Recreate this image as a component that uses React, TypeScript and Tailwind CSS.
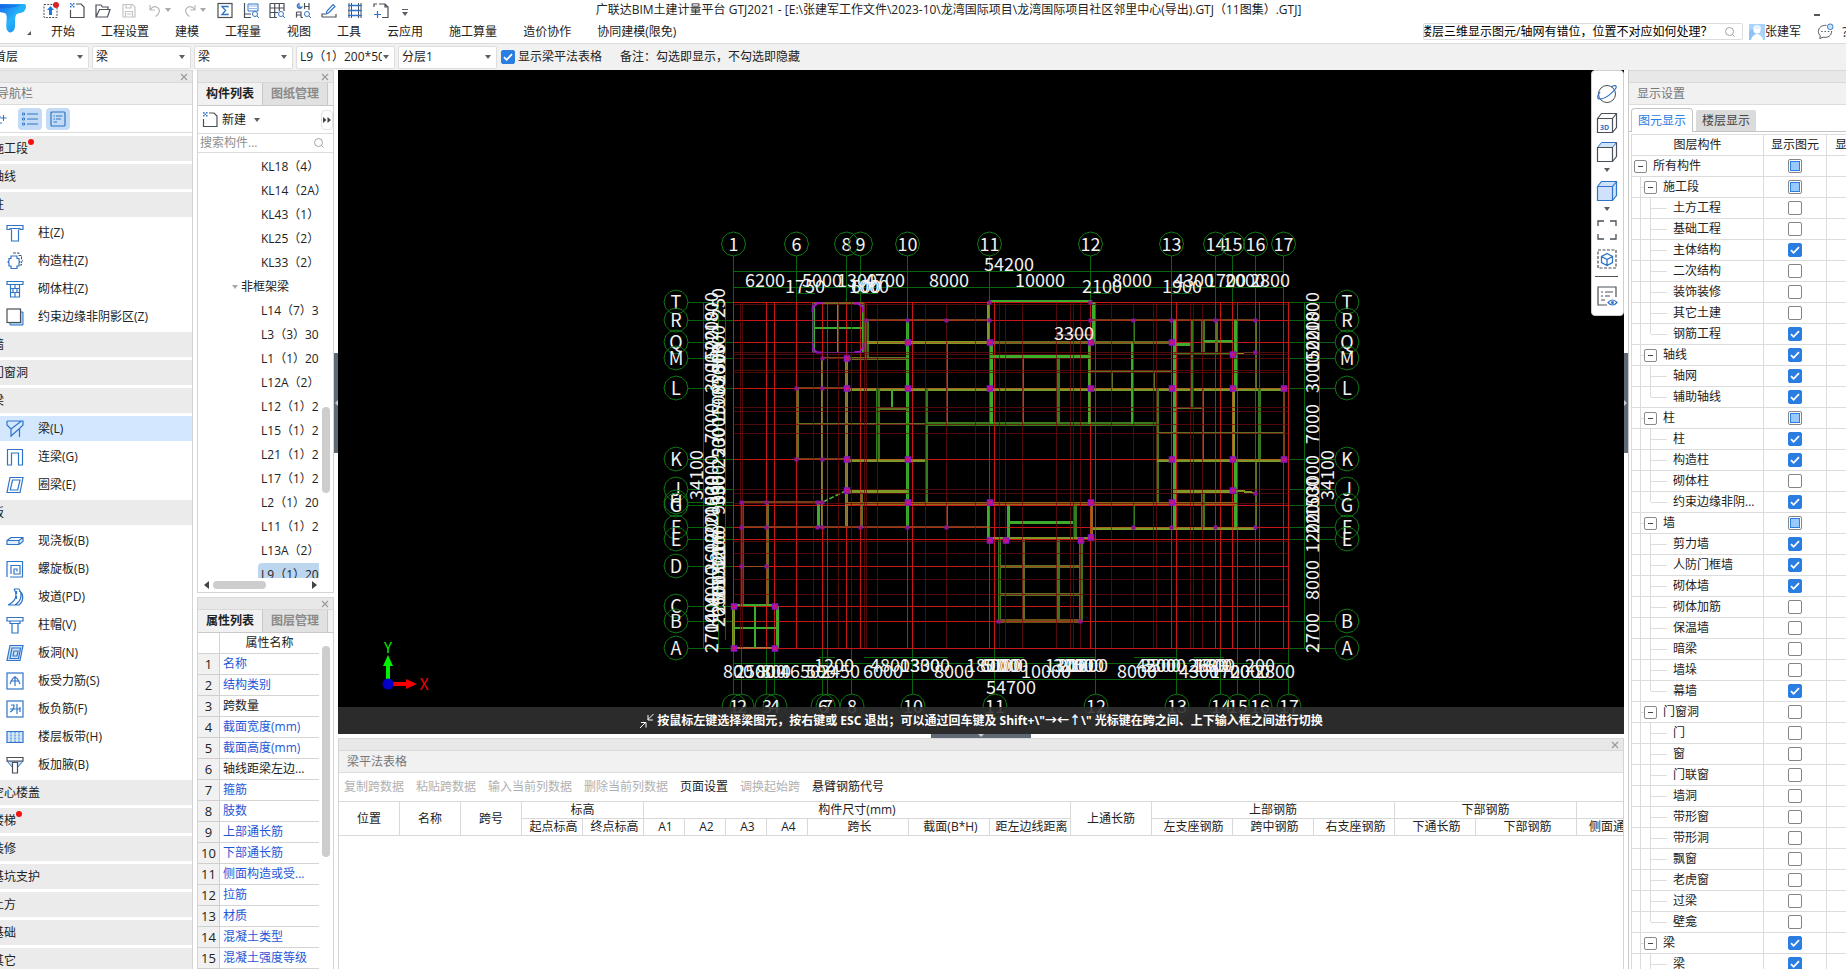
import { useEffect, useRef, type ReactNode } from "react";

const FONT = "font-['Open_Sans','Noto_Sans_CJK_SC',sans-serif]";

/* ---------- shared controls ---------- */

type CheckState = "on" | "off" | "mixed";

function Check({ id, label, state }: { id: string; label?: string; state: CheckState }) {
  const ref = useRef<HTMLInputElement>(null);
  useEffect(() => {
    if (ref.current) ref.current.indeterminate = state === "mixed";
  }, [state]);
  return (
    <span className="relative flex h-3.5 w-3.5 shrink-0">
      <input
        ref={ref}
        id={id}
        type="checkbox"
        aria-label={label}
        defaultChecked={state === "on"}
        className="peer h-3.5 w-3.5 appearance-none rounded-xs border border-[#858585] bg-white checked:border-[#2a7de1] checked:bg-[#2a7de1]"
      />
      <svg viewBox="0 0 14 14" className="pointer-events-none absolute inset-0 hidden h-3.5 w-3.5 peer-checked:block">
        <path d="M3 7.2 5.6 9.8 11 4.2" fill="none" stroke="#fff" strokeWidth="1.8" />
      </svg>
      <span className="pointer-events-none absolute inset-0.5 hidden border border-[#2a7de1] bg-[#99caff] peer-indeterminate:block" />
    </span>
  );
}

function CloseStrip({ name, closable = true }: { name: string; closable?: boolean }) {
  return (
    <div className="flex h-[13px] shrink-0 items-center justify-end border-t border-b border-[#d9d9d9] bg-[#e8e8e8] pr-1">
      {closable && (
        <button aria-label={"关闭" + name} className="flex">
          <svg viewBox="0 0 8 8" className="h-2 w-2">
            <path d="M1 1 7 7M7 1 1 7" stroke="#9a9a9a" strokeWidth="1.2" />
          </svg>
        </button>
      )}
    </div>
  );
}

function Caret({ light = false }: { light?: boolean }) {
  return (
    <svg viewBox="0 0 6 4" className="h-1 w-1.5">
      <path d="M0 0h6L3 4z" fill={light ? "#a8a8a8" : "#5a5f66"} />
    </svg>
  );
}

/* ---------- top bar icons ---------- */

const K = "#4a5058";
const B = "#2f74c8";

const topIcons: { name: string; art: ReactNode; menu?: boolean }[] = [
  {
    name: "更新",
    art: (
      <>
        <rect x="1" y="2.5" width="13" height="13" fill="none" stroke={K} strokeDasharray="2 1.2" />
        <path d="M7.5 4 11 8H9v5H6V8H4z" fill="#1e78e0" />
        <circle cx="13" cy="3" r="3" fill="#d8232a" />
      </>
    ),
  },
  {
    name: "新建",
    art: (
      <>
        <path d="M7 2h5l3 3v10.5H1.500V8" fill="none" stroke={K} strokeWidth="1.2" />
        <path d="M1 1h1.500v1.500H1zM4 1h1.500v1.500H4zM2.500 2.500H4V4H2.500zM1 4h1.500v1.500H1zM4 4h1.500v1.500H4z" fill={B} />
      </>
    ),
  },
  { name: "打开", art: <path d="M1 15V3h5l1.500 2H13v2.500M1 15h11.500l2.500-7.500H4.500z" fill="none" stroke={K} strokeWidth="1.200" /> },
  { name: "保存", art: <path d="M2 2.500h9.500L14 5v10H2zM5 2.500V6h5V2.500M4.500 15V9.500h7V15M6 12h4" fill="none" stroke="#c4c4c4" strokeWidth="1.200" /> },
  { name: "撤销", menu: true, art: <path d="M3 3v5h5M3 8c2-3 5-4 7.500-2.500 3 2 2.500 6-2 9" fill="none" stroke="#b9b9b9" strokeWidth="1.200" /> },
  { name: "重做", menu: true, art: <path d="M13 3v5H8M13 8c-2-3-5-4-7.500-2.500-3 2-2.500 6 2 9" fill="none" stroke="#b9b9b9" strokeWidth="1.200" /> },
  {
    name: "汇总",
    art: (
      <>
        <rect x="1" y="1.500" width="14" height="14" fill="none" stroke={K} strokeWidth="1.200" />
        <path d="M11 5.500V4.500H5l3.500 4L5 12.500h6v-1" fill="none" stroke={B} strokeWidth="1.300" />
      </>
    ),
  },
  {
    name: "查看计算式",
    art: (
      <>
        <path d="M1.500 1v14.500H8M1.500 12H8" fill="none" stroke={K} strokeWidth="1.200" />
        <path d="M5 2h10v7H5z" fill="none" stroke={B} />
        <path d="M6.500 4h7M6.500 6.500h7" stroke={B} strokeDasharray="1 1" />
        <circle cx="12" cy="12" r="2.500" fill="#fff" stroke={B} />
        <path d="m14 14 2 2" stroke={B} />
      </>
    ),
  },
  {
    name: "查看工程量",
    art: (
      <>
        <path d="M1 1.500h14V9M1 1.500v14h7M1 6h14M1 10.500h8M5.700 1.500v14M10.300 1.500V9" fill="none" stroke={K} strokeWidth="1.200" />
        <circle cx="12" cy="12" r="2.500" fill="#fff" stroke={B} />
        <path d="m14 14 2 2" stroke={B} />
      </>
    ),
  },
  {
    name: "查看钢筋量",
    art: (
      <>
        <path d="M9.500 1v6M14 1v7M9.500 4.500H14M1.500 10v5.500M1.500 10H6v5.500M1.500 13H6M6 15.500h2" fill="none" stroke={K} strokeWidth="1.200" />
        <path d="M4 1.500A2.500 2.500 0 1 0 7 5H4z" fill="none" stroke={B} strokeWidth="1.200" />
        <circle cx="12" cy="12" r="2.500" fill="#fff" stroke={B} />
        <path d="m14 14 2 2" stroke={B} />
      </>
    ),
  },
  {
    name: "编辑",
    art: (
      <>
        <path d="M1 15h14v-3M1 15v-3h3" fill="none" stroke={K} strokeWidth="1.200" />
        <path d="m5 12 1-3 6-6.500 2 2-6.500 6.500z" fill="none" stroke={B} strokeWidth="1.200" />
      </>
    ),
  },
  {
    name: "钢筋三维",
    art: (
      <>
        <path d="M2 1v15M4.500 1v15M11.500 1v15M14 1v15" stroke={K} />
        <path d="M1 3.500h14M1 8.500h14M1 13.500h14" stroke={B} strokeWidth="1.600" />
      </>
    ),
  },
  {
    name: "局部三维",
    art: (
      <>
        <path d="M1 5V2h3M6 2h6l3 3v10.500H9M12 2v3h3" fill="none" stroke={K} strokeWidth="1.200" />
        <path d="M4.500 9v7M1 12.500h7" stroke={B} strokeWidth="1.200" />
      </>
    ),
  },
];

const menus = ["开始", "工程设置", "建模", "工程量", "视图", "工具", "云应用", "施工算量", "造价协作", "协同建模(限免)"];

function Header() {
  return (
    <header className="flex h-11 shrink-0 border-b border-[#dcdcdc] bg-white">
      <div className="relative w-[43px] shrink-0">
        <svg viewBox="0 0 32 40" className="h-10 w-8">
          <defs>
            <linearGradient id="logo" x1="0" y1="0" x2="1" y2="1">
              <stop offset="0" stopColor="#1b6fe8" />
              <stop offset=".5" stopColor="#25b4fb" />
              <stop offset="1" stopColor="#1677ea" />
            </linearGradient>
          </defs>
          <path d="M0 4h25q2 2 0 6c-2 4-7 2-9 5-2 4 0 12-2 15q-4 5-7 0c-2-4 1-12-1-16-2-2-4-1-6-2z" fill="url(#logo)" />
          <path d="M0 5h20q-9 4-20 3z" fill="#0f5fd8" opacity=".5" />
          <path d="M31 31v4h-4z" fill="#555" />
        </svg>
      </div>
      <div className="flex min-w-0 flex-1 flex-col">
        <div className="flex h-5 items-center">
          <div className="flex shrink-0 items-center gap-2.5">
            {topIcons.map((i) => (
              <button key={i.name} aria-label={i.name} className={i.menu ? "flex w-[25px] items-center gap-0.5" : "flex w-4"}>
                <svg viewBox="0 0 16 17" className="h-[17px] w-4 shrink-0">
                  {i.art}
                </svg>
                {i.menu && <Caret light />}
              </button>
            ))}
            <button aria-label="自定义工具栏" className="flex w-3 flex-col items-center gap-0.5 pt-1">
              <span className="h-px w-1.5 bg-[#5a5f66]" />
              <Caret />
            </button>
          </div>
          <h1 className="min-w-0 flex-1 text-center text-xs leading-5 whitespace-pre text-[#222]">
            广联达BIM土建计量平台 GTJ2021 - [E:\张建军工作文件\2023-10\龙湾国际项目\龙湾国际项目社区邻里中心(导出).GTJ（11图集）.GTJ]
          </h1>
          <div className="flex w-[360px] shrink-0 justify-end pr-[26px]">
            <button aria-label="最小化" className="flex h-3 w-1.5 items-end">
              <span className="h-0.5 w-full bg-[#555]" />
            </button>
          </div>
        </div>
        <div className="flex h-[23px] items-center">
          <nav className="flex gap-[26px] pl-2 text-xs text-[#222]">
            {menus.map((m) => (
              <a key={m} href="#" className="whitespace-nowrap">
                {m}
              </a>
            ))}
          </nav>
          <div className="ml-auto flex shrink-0 items-center">
            <div className="flex h-[17px] w-80 items-center overflow-hidden rounded-xs border border-[#dcdcdc] pr-1.5">
              <input
                aria-label="搜索问题"
                defaultValue="楼层三维显示图元/轴网有错位，位置不对应如何处理？"
                className="-ml-1 min-w-0 flex-1 text-xs text-black outline-none"
              />
              <SearchIcon />
            </div>
            <svg viewBox="0 0 16 16" className="ml-1.5 h-4 w-4">
              <rect width="16" height="16" fill="#a9d3fb" />
              <path d="M0 8q3-6 6 0v8H0z" fill="#8fc2f5" />
              <circle cx="8" cy="6" r="3.500" fill="#fff" />
              <path d="M4 5q0-4 4-4t4 4z" fill="#e8f3fe" />
              <path d="M2 16q1-5 6-6 5 1 6 6z" fill="#fff" />
            </svg>
            <span className="text-xs text-[#222]">张建军</span>
            <button aria-label="消息" className="ml-4 flex">
              <svg viewBox="0 0 18 18" className="h-[17px] w-[17px]">
                <path d="M10 2.500C5 2 1.500 5 1.500 9c0 2 1 3.500 2 4.500L3 16.500l3.500-1.500c5 1 9-1.500 9-6.500" fill="none" stroke={K} />
                <circle cx="14" cy="4" r="3" fill="#cfe4fb" stroke={B} />
                <path d="M4.500 9h1.500M8 9h1.500M11.500 9H13" stroke={K} strokeWidth="1.300" />
              </svg>
            </button>
            <button aria-label="帮助" className="ml-2 w-1 overflow-hidden text-sm text-[#333]">
              ?
            </button>
          </div>
        </div>
      </div>
    </header>
  );
}

function SearchIcon() {
  return (
    <svg viewBox="0 0 12 12" className="h-3 w-3 shrink-0">
      <circle cx="5.500" cy="5.500" r="4" fill="none" stroke="#a5a5a5" />
      <path d="m8.500 8.500 2 2" stroke="#a5a5a5" />
    </svg>
  );
}

const combos = [
  ["楼层", "首层"],
  ["构件大类", "梁"],
  ["构件类型", "梁"],
  ["构件", "L9（1）200*500"],
  ["分层", "分层1"],
];

function ComboBar() {
  return (
    <div className="flex h-[26px] shrink-0 items-center bg-[#f1f1f1] text-xs text-[#222]">
      <div className="-ml-2.5 flex gap-[3px]">
        {combos.map(([label, value]) => (
          <div key={label} className="relative flex h-[23px] w-[99px] items-center">
            <select
              aria-label={label}
              className="h-full w-full appearance-none rounded-xs border border-[#dedede] bg-white pr-3 pl-[3px] outline-none"
            >
              <option>{value}</option>
            </select>
            <span className="pointer-events-none absolute right-1.5">
              <Caret />
            </span>
          </div>
        ))}
      </div>
      <div className="ml-1 flex items-center gap-[3px]">
        <Check id="show-beam-table" state="on" />
        <label htmlFor="show-beam-table">显示梁平法表格</label>
      </div>
      <span className="ml-[18px]">备注：勾选即显示，不勾选即隐藏</span>
    </div>
  );
}

/* ---------- navigation ---------- */

const S = { fill: "none", stroke: B, strokeWidth: 1.2 };

const navArt: Record<string, ReactNode> = {
  column: <path d="M1 1.500h16v4H14v-1H4v1H1zM5.500 5.500V17h7V5.500" {...S} />,
  structural: (
    <>
      <path d="M7 1h6v2.500h2.500V7l1 1.500-1 1.500v3H13" fill="none" stroke={K} strokeDasharray="3 1" />
      <path d="M5 4h6v2.500h2V9l1 1-1 1v3h-2v2.500H5V14H3v-3l-1-1 1-1V6.500h2z" {...S} />
    </>
  ),
  masonry: <path d="M1 1.500h16v3H1zM4.500 4.500V17h9V4.500M4.500 8.500h9M4.500 12.500h9M9 4.500v4M7 8.500v4M11 8.500v4M9 12.500V17" {...S} />,
  edge: (
    <>
      <path d="M4 14v3h13V4h-2.500v10.500z" fill="#b6d6f7" stroke={B} />
      <rect x="1" y="1" width="13.500" height="13.500" fill="#fff" stroke={K} strokeWidth="1.200" />
    </>
  ),
  beam: <path d="M1 1h16v4l-3.500 3.500V17M1 1v4l4 4v8M5 9 15.500 1M5 16l8.500-7.500" {...S} />,
  linkBeam: <path d="M1.500 17V1.500h15V17h-4V5h-7v12z" {...S} />,
  ringBeam: <path d="M4 1.500h13L14 16.500H1zM6.500 4h7.500l-2.300 10H4.300z" {...S} />,
  slab: <path d="M1 8.500 5 5.500h12v4L13 12.500H1zM1 8.500h12l4-3M13 8.500v4" fill="#e0effd" stroke={B} strokeWidth="1.200" />,
  spiral: <path d="M1 17V1.500h15.500V17H4M5 14V5.500h9V14H8V9h3v2.500" {...S} />,
  ramp: <path d="M8 1c4 6 2 12-6 16M13 1c4 6 2 12-4 16M2 17h7M8 1h5M13 3c5 2 5 10 0 14H9M10.500 3v3M10.500 8v3" {...S} />,
  cap: <path d="M1 1.500h16v3.500h-3v2.500H4V5H1zM6 7.500V17h6V7.500M1 5h16" {...S} />,
  hole: (
    <>
      <path d="M4 1.500h13L14 16.500H1z" fill="#cfe4fb" stroke={B} strokeWidth="1.200" />
      <path d="M6 4h8.500l-2 10.500H4zM8 7h4l-1 5H7z" {...S} />
    </>
  ),
  rebarS: (
    <>
      <rect x="1" y="1" width="16" height="16" fill="none" stroke={B} strokeWidth="1.200" />
      <path d="M9 4v10M4 12c2-4 2-6 5-7 3 1 3 3 5 7M4.500 9h9" {...S} />
    </>
  ),
  rebarF: (
    <>
      <rect x="1" y="1" width="16" height="16" fill="none" stroke={B} strokeWidth="1.200" />
      <path d="M5 5h3c0 4-1 6-4 7M11 4v10M4 9h10M14 7v5" {...S} />
    </>
  ),
  strip: (
    <>
      <path d="M1 3.500h16v11H1z" fill="#d3e7fc" stroke={B} strokeWidth="1.200" />
      <path d="M5 3.500v11M9 3.500v11M13 3.500v11" stroke={B} strokeDasharray="2 1" />
    </>
  ),
  haunch: (
    <>
      <path d="M1 5h16l-6 7H7z" fill="#cfe4fb" stroke={B} />
      <path d="M1 1.500h16V5H1zM6.500 6.500h5V17h-5z" fill="#fff" stroke={K} strokeWidth="1.200" />
    </>
  ),
};

type NavRow = { t: string; art?: string; dot?: boolean; active?: boolean };
const navRows: NavRow[] = [
  { t: "施工段", dot: true },
  { t: "轴线" },
  { t: "柱" },
  { t: "柱(Z)", art: "column" },
  { t: "构造柱(Z)", art: "structural" },
  { t: "砌体柱(Z)", art: "masonry" },
  { t: "约束边缘非阴影区(Z)", art: "edge" },
  { t: "墙" },
  { t: "门窗洞" },
  { t: "梁" },
  { t: "梁(L)", art: "beam", active: true },
  { t: "连梁(G)", art: "linkBeam" },
  { t: "圈梁(E)", art: "ringBeam" },
  { t: "板" },
  { t: "现浇板(B)", art: "slab" },
  { t: "螺旋板(B)", art: "spiral" },
  { t: "坡道(PD)", art: "ramp" },
  { t: "柱帽(V)", art: "cap" },
  { t: "板洞(N)", art: "hole" },
  { t: "板受力筋(S)", art: "rebarS" },
  { t: "板负筋(F)", art: "rebarF" },
  { t: "楼层板带(H)", art: "strip" },
  { t: "板加腋(B)", art: "haunch" },
  { t: "空心楼盖" },
  { t: "楼梯", dot: true },
  { t: "装修" },
  { t: "基坑支护" },
  { t: "土方" },
  { t: "基础" },
  { t: "其它" },
];

function NavPanel() {
  return (
    <aside className="flex w-[193px] shrink-0 flex-col overflow-hidden border-r border-[#d4d4d4] bg-white text-xs text-[#222]">
      <CloseStrip name="导航栏" />
      <h2 className="-ml-[3px] h-[22px] shrink-0 border-b border-[#dcdcdc] bg-[#f1f1f1] leading-[21px] text-[#777]">导航栏</h2>
      <div className="flex h-7 shrink-0 items-center gap-1 border-b border-[#dcdcdc]">
        <button aria-label="添加" className="flex w-3.5">
          <svg viewBox="0 0 14 16" className="h-4 w-3.5">
            <path d="M0 12h2M0 6h1M3.500 4v6M0.500 7h6" fill="none" stroke={B} />
          </svg>
        </button>
        <button aria-label="列表视图" className="flex h-[22px] w-6 items-center justify-center rounded-sm bg-[#c3dbf4]">
          <svg viewBox="0 0 16 14" className="h-3.5 w-4">
            <path d="M5 2h11M5 7h11M5 12h11" stroke={B} />
            <path d="M.5 1h2v2h-2zM.5 6h2v2h-2zM.5 11h2v2h-2z" fill="none" stroke={B} strokeWidth=".9" />
          </svg>
        </button>
        <button aria-label="分组视图" className="flex h-[22px] w-6 items-center justify-center rounded-sm bg-[#c3dbf4]">
          <svg viewBox="0 0 16 16" className="h-4 w-4">
            <rect x="1" y="1" width="14" height="14" rx="1" {...S} />
            <path d="M3.500 5h1.500M6 5h6.500M3.500 8h1.500M6 8h5M3.500 11H7" stroke={B} />
          </svg>
        </button>
      </div>
      <ul className="flex flex-col gap-[3px] pt-[3px]">
        {navRows.map((r, i) => (
          <li key={i}>
            <a
              href="#"
              className={
                "flex h-[25px] items-center " + (r.art ? (r.active ? "bg-[#d3e7ff] pl-1.5" : "pl-1.5") : "bg-[#ebebeb]")
              }
            >
              {r.art ? (
                <>
                  <svg viewBox="0 0 18 18" className="mr-3.5 h-[18px] w-[18px] shrink-0">
                    {navArt[r.art]}
                  </svg>
                  {r.t}
                </>
              ) : (
                <span className="-ml-2 flex">
                  {r.t}
                  {r.dot && <i className="-mt-0.5 h-1.5 w-1.5 rounded-full bg-[#f50f0f]" />}
                </span>
              )}
            </a>
          </li>
        ))}
      </ul>
    </aside>
  );
}

/* ---------- component list and properties ---------- */

function PanelTabs({ a, b }: { a: string; b: string }) {
  return (
    <div role="tablist" className="flex h-[23px] shrink-0 border-b border-[#c9c9c9] bg-[#f1f1f1] font-bold">
      <button role="tab" aria-selected="true" className="w-[65px] border-r border-[#c9c9c9] text-[#222]">
        {a}
      </button>
      <button role="tab" aria-selected="false" className="w-[65px] border-r border-[#c9c9c9] bg-[#e1e1e1] text-[#8a8a8a]">
        {b}
      </button>
    </div>
  );
}

const members = [
  "KL18（4）", "KL14（2A）", "KL43（1）", "KL25（2）", "KL33（2）", "非框架梁", "L14（7）3", "L3（3）30", "L1（1）20",
  "L12A（2）", "L12（1）2", "L15（1）2", "L21（1）2", "L17（1）2", "L2（1）20", "L11（1）2", "L13A（2）", "L9（1）20",
];

const props: [string, boolean][] = [
  ["名称", true], ["结构类别", true], ["跨数量", false], ["截面宽度(mm)", true], ["截面高度(mm)", true], ["轴线距梁左边...", false],
  ["箍筋", true], ["肢数", true], ["上部通长筋", true], ["下部通长筋", true], ["侧面构造或受...", true], ["拉筋", true],
  ["材质", true], ["混凝土类型", true], ["混凝土强度等级", true],
];

function ComponentColumn() {
  return (
    <div className="mx-1 flex w-[137px] shrink-0 flex-col overflow-hidden text-xs text-[#222]">
      <section className="flex h-[523px] shrink-0 flex-col border border-t-0 border-[#d4d4d4] bg-white">
        <CloseStrip name="构件列表" />
        <PanelTabs a="构件列表" b="图纸管理" />
        <div className="flex h-7 shrink-0 items-center border-b border-[#dcdcdc] pl-1">
          <button className="flex items-center gap-1">
            <svg viewBox="0 0 16 17" className="h-[17px] w-4">
              {topIcons[1].art}
            </svg>
            新建
            <span className="ml-1">
              <Caret />
            </span>
          </button>
          <button aria-label="更多" className="ml-auto flex h-5 w-3 items-center justify-center rounded-sm border border-[#e2e2e2]">
            <svg viewBox="0 0 8 6" className="h-1.5 w-2">
              <path d="M0 0l3.500 3L0 6zM4.500 0 8 3 4.500 6z" fill="#444" />
            </svg>
          </button>
        </div>
        <div className="flex h-[19px] shrink-0 items-center border-b border-[#dcdcdc] pr-2 pl-0.5">
          <input aria-label="搜索构件" placeholder="搜索构件..." className="min-w-0 flex-1 outline-none placeholder:text-[#8f8f8f]" />
          <SearchIcon />
        </div>
        <div className="flex min-h-0 flex-1">
          <ul className="w-[121px] overflow-hidden pt-0.5">
            {members.map((m, i) =>
              m === "非框架梁" ? (
                <li key={i} className="flex h-6 items-center gap-[3px] pl-[34px]">
                  <Caret light />
                  {m}
                </li>
              ) : (
                <li key={i} className="flex h-6 pl-[60px]">
                  <span className={"flex-1 overflow-hidden pl-[3px] leading-6 whitespace-pre " + (i === 17 ? "rounded-tl-sm bg-[#bdd6f0]" : "")}>
                    {m}
                  </span>
                </li>
              ),
            )}
          </ul>
          <div className="flex flex-1 flex-col items-center">
            <span className="mt-[254px] h-[86px] w-2 rounded-full bg-[#cdcdcd]" />
          </div>
        </div>
        <div className="flex h-3.5 shrink-0 items-center pr-4 pl-1.5">
          <svg viewBox="0 0 5 8" className="h-2 w-[5px]">
            <path d="M5 0v8L0 4z" fill="#444" />
          </svg>
          <span className="ml-1 h-2 w-[53px] rounded-full bg-[#cdcdcd]" />
          <svg viewBox="0 0 5 8" className="ml-auto h-2 w-[5px]">
            <path d="M0 0v8l5-4z" fill="#444" />
          </svg>
        </div>
      </section>
      <section className="mt-1 flex min-h-0 flex-1 flex-col border border-y-0 border-[#d4d4d4] bg-white">
        <CloseStrip name="属性列表" />
        <PanelTabs a="属性列表" b="图层管理" />
        <div className="flex min-h-0 flex-1 overflow-hidden">
          <table className="w-[121px] table-fixed border-separate border-spacing-0 self-start">
            <thead>
              <tr>
                <th className="h-[21px] w-[22px] border-r border-b border-[#d4d4d4] p-0">
                  <span className="sr-only" />
                </th>
                <th className="h-[21px] border-b border-[#d4d4d4] p-0 leading-4 font-normal">属性名称</th>
              </tr>
            </thead>
            <tbody>
              {props.map(([p, link], i) => (
                <tr key={p}>
                  <td className="h-[21px] border-r border-b border-[#cfcfcf] bg-[#f1f1f1] p-0 text-center text-[13px] leading-4">{i + 1}</td>
                  <td className={"h-[21px] border-b border-[#d4d4d4] p-0 pl-[3px] leading-4 whitespace-nowrap " + (link ? "text-[#1f57d6]" : "")}>
                    {p}
                  </td>
                </tr>
              ))}
            </tbody>
          </table>
          <div className="flex flex-1 justify-center">
            <span className="mt-[13px] h-[211px] w-2 rounded-full bg-[#cdcdcd]" />
          </div>
        </div>
      </section>
    </div>
  );
}

/* ---------- drawing ---------- */

const topAxes: [string, number][] = [
  ["1", 734], ["6", 797], ["8", 847], ["9", 861], ["10", 908], ["11", 990], ["12", 1091], ["13", 1172], ["14", 1216], ["15", 1233], ["16", 1256], ["17", 1284],
];
const bottomAxes: [string, number][] = [
  ["1", 734], ["2", 742], ["3", 767], ["4", 775], ["6", 823], ["7", 828], ["8", 852], ["10", 913], ["11", 995], ["12", 1096], ["13", 1177], ["14", 1221], ["15", 1238], ["16", 1260], ["17", 1289],
];
const leftAxes: [string, number][] = [
  ["T", 302], ["R", 320], ["Q", 342], ["M", 358], ["L", 388], ["K", 459], ["J", 489], ["H", 502], ["G", 505], ["F", 527], ["E", 539], ["D", 566], ["C", 606], ["B", 621], ["A", 648],
];
const rightAxes = leftAxes.filter(([n]) => !["H", "D", "C"].includes(n));

const dims: [string, number, number][] = [
  ["54200", 1009, 264],
  ["6200", 765, 280], ["5000", 822, 280], ["1300", 857, 280], ["4700", 885, 280], ["8000", 949, 280], ["10000", 1040, 280], ["8000", 1132, 280],
  ["4300", 1194, 280], ["1700", 1226, 280], ["2000", 1245, 280], ["2800", 1270, 280],
  ["1750", 805, 286], ["1000", 869, 286], ["600", 866, 286], ["2100", 1102, 286], ["1900", 1182, 286], ["3300", 1074, 333],
  ["800", 738, 671], ["2500", 755, 671], ["800", 771, 671], ["800", 776, 671], ["4650", 800, 671], ["500", 821, 671], ["2450", 840, 671],
  ["6000", 883, 671], ["8000", 954, 671], ["10000", 1046, 671], ["8000", 1137, 671], ["4300", 1199, 671], ["1700", 1230, 671], ["2000", 1250, 671],
  ["2800", 1275, 671],
  ["1200", 834, 665], ["4800", 890, 665], ["1300", 920, 665], ["3300", 930, 665], ["1800", 986, 665], ["6000", 1000, 665], ["5100", 1003, 665],
  ["1000", 1008, 665], ["1300", 1065, 665], ["3200", 1073, 665], ["2000", 1078, 665], ["1500", 1084, 665], ["1600", 1088, 665], ["4200", 1156, 665],
  ["3300", 1161, 665], ["5000", 1166, 665], ["2600", 1208, 665], ["1800", 1212, 665], ["1600", 1215, 665], ["200", 1260, 665],
  ["54700", 1011, 687],
];

const dimsV: [string, number, number][] = [
  ["34100", 696, 475], ["34100", 1327, 475],
  ["1800", 711, 312], ["2200", 711, 331], ["1500", 711, 350], ["3000", 711, 373], ["7000", 711, 423], ["3000", 711, 475], ["1500", 711, 496],
  ["2200", 711, 516], ["1200", 711, 533], ["2600", 711, 553], ["4000", 711, 586], ["1400", 711, 613], ["2700", 711, 633],
  ["250", 718, 303], ["1300", 718, 345], ["500", 718, 358], ["2800", 718, 364], ["850", 718, 380], ["1900", 718, 398], ["1500", 718, 405],
  ["2300", 718, 437], ["2500", 718, 448], ["3300", 718, 485], ["350", 718, 491], ["900", 718, 500], ["2100", 718, 545], ["1200", 718, 550],
  ["1300", 718, 566], ["1500", 718, 580], ["2600", 718, 595], ["2650", 718, 607],
  ["1800", 1312, 312], ["2200", 1312, 331], ["1500", 1312, 350], ["3000", 1312, 373], ["7000", 1312, 424], ["3000", 1312, 475], ["1500", 1312, 497],
  ["2200", 1312, 514], ["1200", 1312, 533], ["8000", 1312, 580], ["2700", 1312, 633],
];

const redV = {
  bright: [734, 767, 775, 797, 823, 828, 847, 861, 908, 913, 990, 995, 1091, 1096, 1172, 1177, 1216, 1221, 1233, 1238, 1256, 1260, 1284, 1289],
  dim: [741, 743, 814, 839, 852, 865, 867, 878, 926, 947, 976, 1000, 1006, 1023, 1057, 1071, 1074, 1081, 1112, 1134, 1154, 1157, 1191, 1194, 1203],
};
const redH = {
  bright: [302, 320, 342, 388, 459, 505, 527, 539, 566, 606, 621, 648],
  dim: [304, 352, 354, 358, 370, 372, 407, 411, 424, 433, 489, 493, 503, 541, 553, 579, 594],
};

const G1 = "#45c433";
const G2 = "#3f8a1f";
const OL = "#6f7f28";
const YG = "#8fae2c";
const BR = "#84481a";
const OR = "#a8781c";

/* x1, y1, x2, y2, colour, width */
const beams: [number, number, number, number, string, number][] = [
  [813, 303, 813, 352, G1, 3], [863, 303, 863, 352, G1, 3], [813, 303, 863, 303, OL, 2], [813, 352, 863, 352, YG, 1], [838, 303, 838, 352, G1, 2],
  [813, 328, 863, 328, G1, 2], [867, 320, 990, 320, BR, 2], [867, 320, 867, 358, G2, 4], [867, 342, 990, 342, YG, 3], [990, 342, 1172, 342, OL, 3],
  [823, 358, 847, 358, BR, 2], [847, 358, 908, 358, OL, 3], [822, 358, 822, 527, G1, 2], [846, 358, 846, 527, G1, 3], [907, 320, 907, 527, G1, 3],
  [797, 388, 847, 388, BR, 2], [847, 389, 1284, 389, YG, 3], [797, 388, 797, 459, OL, 3], [878, 388, 878, 459, G2, 4], [892, 389, 892, 407, G1, 2],
  [878, 408, 908, 408, OL, 3], [797, 424, 926, 424, OL, 2], [926, 424, 1157, 424, G2, 4], [926, 388, 926, 503, G2, 3], [947, 342, 947, 424, OL, 2],
  [797, 459, 847, 459, BR, 2], [847, 460, 926, 460, YG, 3], [988, 302, 988, 342, YG, 3], [991, 342, 991, 424, G1, 3], [990, 301, 1092, 301, G1, 2],
  [1093, 302, 1093, 342, G1, 3], [1089, 342, 1089, 424, G1, 3], [991, 356, 1090, 356, G1, 3], [1091, 320, 1256, 320, BR, 2],
  [1134, 320, 1134, 342, G2, 2], [1132, 342, 1132, 424, G1, 3], [1112, 371, 1112, 388, OL, 2], [1154, 371, 1154, 388, OL, 2],
  [1091, 371, 1172, 371, OL, 2], [1023, 358, 1023, 424, OL, 2], [1058, 358, 1058, 424, G2, 3], [1157, 388, 1157, 503, G2, 3],
  [1174, 320, 1174, 527, G1, 3], [1174, 344, 1191, 344, G1, 3], [1192, 320, 1192, 352, G2, 3], [1203, 320, 1203, 352, G2, 4],
  [1204, 341, 1233, 341, G1, 3], [1216, 320, 1216, 352, OL, 3], [1174, 354, 1233, 354, G2, 2], [1233, 354, 1256, 352, YG, 1],
  [1235, 320, 1235, 388, G1, 3], [1233, 388, 1233, 459, YG, 3], [1235, 459, 1235, 527, G1, 3], [1256, 320, 1256, 388, OL, 2],
  [1259, 388, 1259, 459, G2, 3], [1256, 459, 1256, 527, OL, 2], [1192, 354, 1192, 408, G2, 2], [1174, 408, 1203, 408, OL, 2],
  [1203, 388, 1203, 459, OL, 2], [1157, 433, 1284, 433, OL, 2], [1284, 388, 1284, 459, BR, 2], [1157, 460, 1284, 460, YG, 3],
  [847, 491, 908, 491, YG, 3], [1174, 491, 1233, 491, YG, 3], [1233, 490, 1256, 493, YG, 2], [742, 502, 823, 502, BR, 2],
  [847, 503, 1235, 503, OR, 3], [742, 527, 990, 527, BR, 2], [1092, 528, 1256, 528, YG, 3], [818, 502, 818, 527, G1, 3],
  [861, 492, 861, 527, OL, 3], [947, 503, 947, 527, OL, 2], [988, 503, 988, 539, G1, 3], [1008, 505, 1008, 538, G1, 3],
  [1008, 522, 1074, 522, G1, 3], [1075, 505, 1075, 538, G2, 4], [990, 538, 1091, 538, YG, 2], [1091, 503, 1091, 538, OR, 3],
  [999, 540, 999, 621, G2, 3], [1023, 540, 1023, 621, OL, 3], [1058, 540, 1058, 621, G2, 3], [1081, 540, 1081, 621, G2, 4],
  [1000, 566, 1081, 566, OL, 3], [1000, 594, 1081, 594, OL, 3], [1000, 621, 1081, 621, "#7a5c1e", 4], [1203, 493, 1203, 527, G2, 4],
  [1134, 505, 1134, 527, G2, 2], [742, 502, 742, 606, BR, 3], [767, 502, 767, 606, OL, 3], [742, 566, 767, 566, OL, 1],
  [733, 606, 733, 648, YG, 3], [777, 606, 777, 648, G1, 3], [733, 605, 777, 605, G1, 2], [733, 648, 777, 648, "#c08a4a", 2],
  [755, 606, 755, 648, G1, 2], [733, 628, 777, 628, G1, 2],
];

const bigNodes: [number, number][] = [
  [847, 358], [847, 388], [908, 342], [908, 388], [990, 342], [990, 388], [1091, 342], [1091, 388], [1172, 342], [1172, 388], [1233, 354],
  [1233, 388], [1284, 388], [847, 459], [908, 459], [1172, 459], [1233, 459], [1284, 459], [847, 490], [908, 502], [990, 502], [1091, 502],
  [1172, 502], [1233, 490], [990, 540], [1006, 540], [1081, 540], [1091, 537], [734, 606], [775, 606], [734, 648], [775, 648],
];
const smallNodes: [number, number][] = [
  [867, 320], [908, 320], [947, 320], [990, 320], [990, 302], [1091, 302], [1091, 320], [1134, 320], [1172, 320], [1216, 320], [1256, 320],
  [1256, 352], [823, 358], [797, 388], [823, 388], [797, 459], [823, 459], [742, 502], [767, 502], [818, 502], [823, 502], [742, 527], [767, 527],
  [818, 527], [823, 527], [861, 527], [908, 527], [947, 527], [742, 566], [767, 566], [999, 621], [1081, 621], [1134, 527], [1172, 527],
  [1216, 527], [1256, 527], [1256, 493],
];

const ring = Array.from({ length: 12 }, (_, i) => {
  const a = (Math.PI / 6) * i;
  return `${(12 * Math.cos(a)).toFixed(1)},${(12 * Math.sin(a)).toFixed(1)}`;
}).join(" ");

function Bubble({ x, y, name }: { x: number; y: number; name: string }) {
  return (
    <g transform={`translate(${x} ${y})`}>
      <polygon points={ring} fill="none" stroke="#0f7a14" strokeWidth="1" />
      <text y="7" fontSize="18" textAnchor="middle" fill="#f2f2f2">
        {name}
      </text>
    </g>
  );
}

function GridLines({ xs, ys }: { xs: number[]; ys: number[] }) {
  return (
    <>
      {xs.map((x) => (
        <path key={"x" + x} d={`M${x - 0.5} 302V648`} />
      ))}
      {ys.map((y) => (
        <path key={"y" + y} d={`M733 ${y + 0.5}H1289`} />
      ))}
    </>
  );
}

function Plan() {
  return (
    <svg viewBox="338 70 1286 664" className="h-full w-full font-['Noto_Sans_CJK_SC',sans-serif]" role="img" aria-label="梁平面图">
      <g stroke="#0a640e" strokeWidth="1" shapeRendering="crispEdges">
        <path d="M733 271.500H1284M733 287.500H1284M797 293.500h18M855 293.500h23M1091 293.500h21M1172 293.500h20" fill="none" />
        <path d="M733 663.500H1289M733 679.500H1289M819 657.500h16M864 657.500h84M976 657.500h48M1058 657.500h38M1134 657.500h43M1194 657.500h30" fill="none" />
        <path d="M703.500 302V648M718.500 302V648M725.500 302V640M1304.500 302V648M1319.500 302V648" fill="none" />
        {topAxes.map(([n, x]) => (
          <path key={n} d={`M${x - 0.5} 256V302`} />
        ))}
        {bottomAxes.map(([n, x]) => (
          <path key={n} d={`M${x - 0.5} 648V694`} />
        ))}
        {leftAxes.map(([n, y]) => (
          <path key={n} d={`M688 ${y + 0.5}H733`} />
        ))}
        {rightAxes.map(([n, y]) => (
          <path key={n} d={`M1289 ${y + 0.5}H1335`} />
        ))}
      </g>
      <g stroke="#c81616" shapeRendering="crispEdges">
        <GridLines xs={redV.bright} ys={redH.bright} />
      </g>
      <g shapeRendering="crispEdges" opacity=".88">
        {beams.map(([x1, y1, x2, y2, c, w], i) => (
          <line key={i} x1={x1} y1={y1} x2={x2} y2={y2} stroke={c} strokeWidth={w} />
        ))}
      </g>
      <path d="M823 502 847 490" stroke={G1} strokeWidth="1.500" strokeDasharray="5 2" />
      <g stroke="#6a0c0c" strokeOpacity=".75" shapeRendering="crispEdges">
        <GridLines xs={redV.dim} ys={redH.dim} />
      </g>
      <g stroke="#c81616" strokeOpacity=".4" shapeRendering="crispEdges">
        <GridLines xs={redV.bright} ys={redH.bright} />
      </g>
      <path
        d="M812.500 312v-4l5-5h5M854 303.500h4l5 4v5M863.500 343v4l-4 5h-5M822 352.500h-5l-4-4v-5"
        fill="none"
        stroke="#a012c8"
        strokeWidth="2"
      />
      <path d="M812.500 303V352.500H863.500V303" fill="none" stroke="#7a14b0" strokeOpacity=".6" />
      <g fill="#cc1470" stroke="#8c14c4" strokeWidth="1.500">
        {bigNodes.map(([x, y], i) => (
          <rect key={i} x={x - 2.5} y={y - 2} width="5" height="5" />
        ))}
      </g>
      <g fill="#b01468" stroke="#7a14a8" strokeWidth="1">
        {smallNodes.map(([x, y], i) => (
          <rect key={i} x={x - 2} y={y - 1} width="3" height="3" />
        ))}
      </g>
      <path d="M1057 339v-4h36" fill="none" stroke="#8a8a8a" />
      {topAxes.map(([n, x]) => (
        <Bubble key={n} x={x - 0.5} y={244} name={n} />
      ))}
      {bottomAxes.map(([n, x]) => (
        <Bubble key={n} x={x} y={706} name={n} />
      ))}
      {leftAxes.map(([n, y]) => (
        <Bubble key={n} x={676} y={y} name={n} />
      ))}
      {rightAxes.map(([n, y]) => (
        <Bubble key={n} x={1347} y={y} name={n} />
      ))}
      <g fill="#f2f2f2" fontSize="18" textAnchor="middle">
        {dims.map(([t, x, y], i) => (
          <text key={i} x={x} y={y + 6.5}>
            {t}
          </text>
        ))}
        {dimsV.map(([t, x, y], i) => (
          <text key={i} transform={`translate(${x + 6.5} ${y}) rotate(-90)`}>
            {t}
          </text>
        ))}
      </g>
      <path d="M388 684V664" stroke="#00f000" strokeWidth="4" />
      <path d="M383 666h10l-5-11z" fill="#00f000" />
      <path d="M390 684h18" stroke="#f00000" strokeWidth="4" />
      <path d="M406 679v10l11-5z" fill="#f00000" />
      <circle cx="388" cy="684" r="5.500" fill="#0000c8" />
      <text x="388" y="653" fontSize="15" textAnchor="middle" fill="#00f000">
        Y
      </text>
      <text x="424" y="690" fontSize="16" textAnchor="middle" fill="#f00000">
        X
      </text>
    </svg>
  );
}

const viewTools: { name: string; art: ReactNode; caret?: boolean; rule?: boolean }[] = [
  {
    name: "动态观察",
    art: (
      <>
        <circle cx="10" cy="10" r="8.500" fill="none" stroke={K} />
        <path d="M3 8C0 12 0 15 3 15c5 0 13-6 16-11 1-3-2-3-5-1" fill="none" stroke={B} strokeWidth="1.200" />
      </>
    ),
  },
  {
    name: "三维",
    art: (
      <>
        <path d="M.5 5.500h15v14H.5zM.5 5.500l4-5h15v14l-4 5M15.500 5.500l4-5" fill="none" stroke={K} strokeWidth="1.200" />
        <text x="7.500" y="16.500" fontSize="7" fontWeight="700" textAnchor="middle" fill={B}>
          3D
        </text>
      </>
    ),
  },
  {
    name: "俯视",
    caret: true,
    art: (
      <>
        <path d="M.5 5.500l4-5h15l-4 5z" fill="#cfe4fb" stroke={B} />
        <path d="M.5 5.500h15v14H.5zM19.500.5v14l-4 5" fill="none" stroke={K} strokeWidth="1.200" />
      </>
    ),
  },
  {
    name: "实体",
    caret: true,
    art: (
      <>
        <path d="M.5 5.500l4-5h15v14l-4 5H.5z" fill="#cfe1fb" stroke={B} strokeWidth="1.200" />
        <path d="M.5 5.500h15v14M15.500 5.500l4-5" fill="none" stroke={B} strokeWidth="1.200" />
      </>
    ),
  },
  { name: "全屏", art: <path d="M1 6V1h6M13 1h6v5M19 14v5h-6M7 19H1v-5" fill="none" stroke={K} strokeWidth="1.300" /> },
  {
    name: "局部三维视图",
    rule: true,
    art: (
      <>
        <rect x="1" y="1" width="18" height="18" fill="none" stroke={K} strokeDasharray="3 1.500" strokeWidth="1.200" />
        <path d="m10 4.500 5.500 3v6L10 16.500l-5.500-3v-6zM4.500 7.500 10 10.500l5.500-3M10 10.500v6" fill="none" stroke={B} strokeWidth="1.300" />
      </>
    ),
  },
  {
    name: "显示设置",
    art: (
      <>
        <path d="M10 19H1V1h18v10M4 6h2M8 6h8M4 10h2M8 10h5M4 14h4" fill="none" stroke={K} strokeWidth="1.200" />
        <path d="M11 16.500q4.500-5 9 0-4.500 5-9 0z" fill="#fff" stroke={B} strokeWidth="1.200" />
        <circle cx="15.500" cy="16.500" r="1.500" fill={B} />
      </>
    ),
  },
];

function Viewport() {
  return (
    <div className="relative min-h-0 flex-1 bg-black">
      <Plan />
      <div className="absolute inset-x-0 bottom-0 flex h-[27px] items-center justify-center gap-0.5 bg-[#303030]/90 text-xs font-bold text-white">
        <svg viewBox="0 0 16 16" className="h-4 w-4">
          <path d="M14.500 1 9 6.500M9 2v5h5M1 15l5.500-5.500M2 9.500h5v5" fill="none" stroke="#fff" />
        </svg>
        <span className="whitespace-pre">
          {'按鼠标左键选择梁图元，按右键或 ESC 退出；可以通过回车键及 Shift+\\"→←↑\\" 光标键在跨之间、上下输入框之间进行切换'}
        </span>
      </div>
      <div className="absolute top-0 right-0 flex h-[246px] w-[33px] flex-col items-center rounded-sm border border-[#cfcfcf] bg-white pt-[13px] pr-0.5">
        {viewTools.map((v) => (
          <button key={v.name} aria-label={v.name} className="flex w-full flex-col items-center pb-[9px]">
            <svg viewBox="0 0 20 20" className="h-5 w-5 overflow-visible">
              {v.art}
            </svg>
            {v.caret && (
              <span className="flex h-2.5 items-end">
                <Caret />
              </span>
            )}
            {v.rule && <span className="mt-[7px] h-px w-[23px] bg-[#555]" />}
          </button>
        ))}
      </div>
      <button aria-label="收起左侧栏" className="absolute top-[283px] -left-1 flex h-[100px] w-1 items-center bg-[#606a75]">
        <svg viewBox="0 0 4 6" className="h-1.5 w-1">
          <path d="M4 0v6L1 3z" fill="#c8ccd0" />
        </svg>
      </button>
      <button aria-label="收起右侧栏" className="absolute top-[283px] -right-1 flex h-[100px] w-1 items-center bg-[#606a75]">
        <svg viewBox="0 0 4 6" className="h-1.5 w-1">
          <path d="M0 0v6l3-3z" fill="#c8ccd0" />
        </svg>
      </button>
      <button
        aria-label="收起表格"
        className="absolute -bottom-1 left-1/2 flex h-1 w-[100px] -translate-x-1/2 justify-center bg-[#606a75]"
      >
        <svg viewBox="0 0 6 4" className="h-1 w-1.5">
          <path d="M0 0h6L3 3z" fill="#c8ccd0" />
        </svg>
      </button>
    </div>
  );
}

/* ---------- beam table ---------- */

const beamTools: [string, boolean][] = [
  ["复制跨数据", false], ["粘贴跨数据", false], ["输入当前列数据", false], ["删除当前列数据", false], ["页面设置", true], ["调换起始跨", false], ["悬臂钢筋代号", true],
];

const subHeads = [
  "起点标高", "终点标高", "A1", "A2", "A3", "A4", "跨长", "截面(B*H)", "距左边线距离", "左支座钢筋", "跨中钢筋", "右支座钢筋", "下通长筋", "下部钢筋", "侧面通",
];

const th = "h-[17px] border-r border-b border-[#d9d9d9] p-0 leading-4 font-normal whitespace-nowrap";

function BeamTable() {
  return (
    <section className="mt-1 flex h-[231px] shrink-0 flex-col overflow-hidden border-x border-[#d4d4d4] bg-white text-xs text-[#222]">
      <CloseStrip name="梁平法表格" />
      <h2 className="h-[22px] shrink-0 border-b border-[#dcdcdc] bg-[#f1f1f1] pl-2 leading-[21px] text-[#777]">梁平法表格</h2>
      <div className="flex h-7 shrink-0 items-center gap-3 pl-[5px]">
        {beamTools.map(([t, on]) => (
          <button key={t} disabled={!on} className={on ? "text-[#222]" : "text-[#b0b0b0]"}>
            {t}
          </button>
        ))}
      </div>
      <table className="w-[1325px] table-fixed border-separate border-spacing-0 border-t border-[#d9d9d9]">
        <colgroup>
          <col className="w-[61px]" />
          <col className="w-[61px]" />
          <col className="w-[61px]" />
          <col className="w-[61px]" />
          <col className="w-[61px]" />
          <col className="w-[41px]" />
          <col className="w-[41px]" />
          <col className="w-[41px]" />
          <col className="w-[41px]" />
          <col className="w-[101px]" />
          <col className="w-[81px]" />
          <col className="w-[81px]" />
          <col className="w-[81px]" />
          <col className="w-[81px]" />
          <col className="w-[81px]" />
          <col className="w-[81px]" />
          <col className="w-[81px]" />
          <col className="w-[101px]" />
          <col className="w-[87px]" />
        </colgroup>
        <thead>
          <tr>
            <th rowSpan={2} className={th}>位置</th>
            <th rowSpan={2} className={th}>名称</th>
            <th rowSpan={2} className={th}>跨号</th>
            <th colSpan={2} className={th}>标高</th>
            <th colSpan={7} className={th}>构件尺寸(mm)</th>
            <th rowSpan={2} className={th}>上通长筋</th>
            <th colSpan={3} className={th}>上部钢筋</th>
            <th colSpan={2} className={th}>下部钢筋</th>
            <th className={th} />
          </tr>
          <tr>
            {subHeads.map((h, i) => (
              <th key={h} className={th + (i === 14 ? " pl-3 text-left" : " pl-[3px]")}>
                {h}
              </th>
            ))}
          </tr>
        </thead>
      </table>
    </section>
  );
}

/* ---------- display settings ---------- */

type TreeRow = [number, string, CheckState];
const tree: TreeRow[] = [
  [0, "所有构件", "mixed"],
  [1, "施工段", "mixed"],
  [2, "土方工程", "off"], [2, "基础工程", "off"], [2, "主体结构", "on"], [2, "二次结构", "off"], [2, "装饰装修", "off"], [2, "其它土建", "off"], [2, "钢筋工程", "on"],
  [1, "轴线", "on"],
  [2, "轴网", "on"], [2, "辅助轴线", "on"],
  [1, "柱", "mixed"],
  [2, "柱", "on"], [2, "构造柱", "on"], [2, "砌体柱", "off"], [2, "约束边缘非阴...", "on"],
  [1, "墙", "mixed"],
  [2, "剪力墙", "on"], [2, "人防门框墙", "on"], [2, "砌体墙", "on"], [2, "砌体加筋", "off"], [2, "保温墙", "off"], [2, "暗梁", "off"], [2, "墙垛", "off"], [2, "幕墙", "on"],
  [1, "门窗洞", "off"],
  [2, "门", "off"], [2, "窗", "off"], [2, "门联窗", "off"], [2, "墙洞", "off"], [2, "带形窗", "off"], [2, "带形洞", "off"], [2, "飘窗", "off"], [2, "老虎窗", "off"],
  [2, "过梁", "off"], [2, "壁龛", "off"],
  [1, "梁", "on"],
  [2, "梁", "on"],
];

function Minus() {
  return (
    <button aria-label="折叠" className="flex h-[13px] w-[13px] shrink-0 items-center justify-center rounded-xs border border-[#8a8a8a] bg-white">
      <span className="h-px w-[5px] bg-[#444]" />
    </button>
  );
}

function DisplayPanel() {
  const cell = "h-[21px] border-r border-b border-[#dcdcdc] p-0 leading-4 font-normal";
  return (
    <aside className="ml-1 flex w-[218px] shrink-0 flex-col overflow-hidden border-l border-[#c9c9c9] bg-white text-xs text-[#222]">
      <CloseStrip name="显示设置" closable={false} />
      <h2 className="h-[22px] shrink-0 border-b border-[#dcdcdc] bg-[#f1f1f1] pl-2 leading-[21px] text-[#777]">显示设置</h2>
      <div role="tablist" className="flex h-[27px] shrink-0 items-end gap-[3px] border-b border-[#c4c4c4] pl-0.5">
        <button role="tab" aria-selected="true" className="-mb-px h-6 w-[62px] rounded-t-sm border border-b-0 border-[#c4c4c4] bg-white text-[#2a7de1]">
          图元显示
        </button>
        <button role="tab" aria-selected="false" className="h-[21px] w-[60px] rounded-t-xs bg-[#dbdbdb] text-[#444]">
          楼层显示
        </button>
      </div>
      <div className="mt-0.5 ml-0.5 overflow-hidden">
        <table className="w-[258px] table-fixed border-separate border-spacing-0 border-t border-l border-[#dcdcdc]">
          <thead>
            <tr>
              <th className={cell + " w-[132px]"}>图层构件</th>
              <th className={cell + " w-[63px]"}>显示图元</th>
              <th className={cell + " pl-2 text-left"}>显</th>
            </tr>
          </thead>
          <tbody>
            {tree.map(([lv, t, st], i) => {
              const last = lv === 2 && tree[i + 1] !== undefined && tree[i + 1][0] !== 2;
              return (
                <tr key={i}>
                  <td className={cell}>
                    <div className="flex h-5 items-center">
                      {lv === 0 && <span className="w-0.5" />}
                      {lv > 0 && <span className="ml-2 h-full w-2.5 shrink-0 border-l border-[#dcdcdc]" />}
                      {lv === 1 && <span className="-ml-2.5 flex w-1 border-t border-[#dcdcdc]" />}
                      {lv === 2 && (
                        <>
                          <span className={"border-l border-[#dcdcdc] " + (last ? "h-1/2 self-start" : "h-full")} />
                          <span className="mr-1.5 w-4 border-t border-[#dcdcdc]" />
                        </>
                      )}
                      {lv < 2 && <Minus />}
                      <span className={"whitespace-nowrap " + (lv < 2 ? "ml-1.5" : "")}>{t}</span>
                    </div>
                  </td>
                  <td className={cell}>
                    <div className="flex justify-center">
                      <Check id={"layer-" + i} label={t + "显示图元"} state={st} />
                    </div>
                  </td>
                  <td className={cell} />
                </tr>
              );
            })}
          </tbody>
        </table>
      </div>
    </aside>
  );
}

export default function App() {
  return (
    <div className={"flex h-screen flex-col overflow-hidden bg-white " + FONT}>
      <Header />
      <ComboBar />
      <main className="flex min-h-0 flex-1">
        <NavPanel />
        <ComponentColumn />
        <div className="flex min-w-0 flex-1 flex-col">
          <Viewport />
          <BeamTable />
        </div>
        <DisplayPanel />
      </main>
    </div>
  );
}
